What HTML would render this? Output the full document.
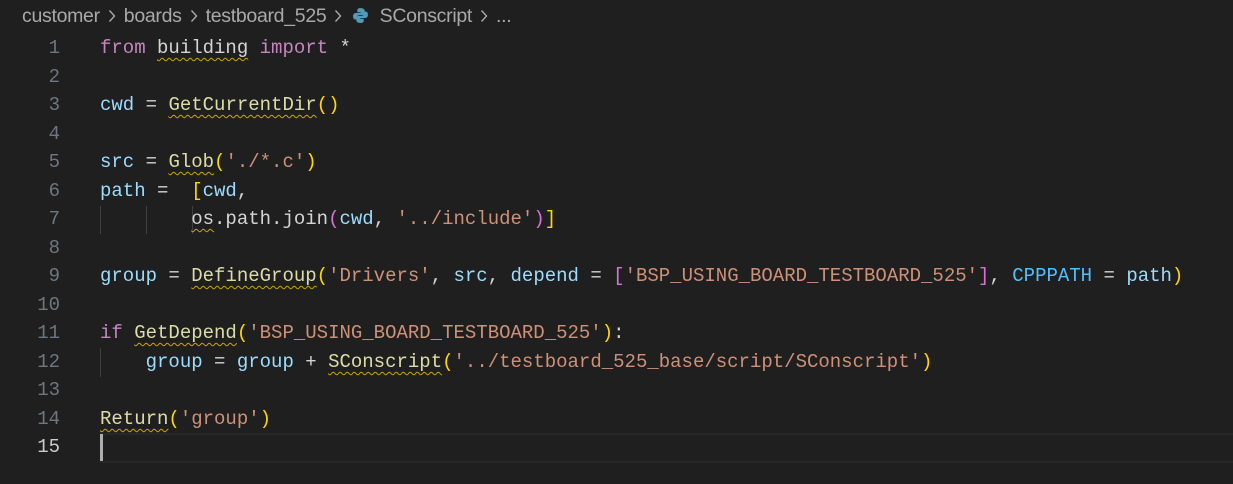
<!DOCTYPE html>
<html><head><meta charset="utf-8"><style>
html,body{margin:0;padding:0;background:#1f1f1f;width:1233px;height:484px;overflow:hidden}
.bc{position:absolute;left:22px;top:5px;font-family:"Liberation Sans",sans-serif;font-size:19.5px;color:#a9a9a9;white-space:pre;letter-spacing:-0.3px}
.bc .s{display:inline-block;width:24px;text-align:center}
.bc .s svg{vertical-align:-1px}
.ln{position:absolute;left:0;width:60px;text-align:right;font-family:"Liberation Mono",monospace;font-size:19px;color:#6e7681}
.ln.a{color:#cccccc}
.code{position:absolute;left:100px;font-family:"Liberation Mono",monospace;font-size:19px;color:#d4d4d4;white-space:pre}
.k{color:#c586c0}.v{color:#9cdcfe}.f{color:#dcdcaa}.s1{color:#ce9178}.c{color:#4fc1ff}
.y{color:#ffd700}.p{color:#da70d6}.b{color:#179fff}
.w{text-decoration:underline wavy #cca700;text-decoration-thickness:1px;text-underline-offset:4px}
.cur{position:absolute;left:100px;top:433px;width:1133px;height:26px;border-top:2px solid #282828;border-bottom:2px solid #282828}
.caret{position:absolute;left:100px;top:434px;width:3px;height:27px;background:#aeafad}
.g{position:absolute;width:1px;background:#404040}
</style></head><body>
<div class="bc">customer<span class="s"><svg width="8" height="14" viewBox="0 0 8 14"><path d="M1.5 1.5 6.5 7 1.5 12.5" stroke="#a9a9a9" stroke-width="1.4" fill="none"/></svg></span>boards<span class="s"><svg width="8" height="14" viewBox="0 0 8 14"><path d="M1.5 1.5 6.5 7 1.5 12.5" stroke="#a9a9a9" stroke-width="1.4" fill="none"/></svg></span>testboard_525<span class="s"><svg width="8" height="14" viewBox="0 0 8 14"><path d="M1.5 1.5 6.5 7 1.5 12.5" stroke="#a9a9a9" stroke-width="1.4" fill="none"/></svg></span><svg width="17" height="17" viewBox="0 0 16 16" style="vertical-align:-2px;margin-left:2px"><path d="M8 1c-3 0-3 1.3-3 2.3V5h3.2v.6H3.5C2 5.6 1 6.8 1 8.8s1 3 2.3 3H4.5v-1.7c0-1.3 1-2.4 2.4-2.4h3c1.1 0 2-.9 2-2V3.3C11.9 2 10.8 1 8 1z" fill="#519aba"/><path d="M8 15c3 0 3-1.3 3-2.3V11H7.8v-.6h4.7c1.5 0 2.5-1.2 2.5-3.2s-1-3-2.3-3h-1.2v1.7c0 1.3-1 2.4-2.4 2.4h-3c-1.1 0-2 .9-2 2v1.9C4.1 14 5.2 15 8 15z" fill="#519aba"/></svg>  SConscript<span class="s"><svg width="8" height="14" viewBox="0 0 8 14"><path d="M1.5 1.5 6.5 7 1.5 12.5" stroke="#a9a9a9" stroke-width="1.4" fill="none"/></svg></span>...</div>

<div class="cur"></div>
<div class="g" style="left:100px;top:206px;height:28px"></div>
<div class="g" style="left:146px;top:206px;height:28px"></div>
<div class="g" style="left:192px;top:206px;height:28px"></div>
<div class="g" style="left:100px;top:348px;height:29px"></div>

<div class="ln" style="top:37px">1</div><div class="code" style="top:37px"><span class="k">from</span> <span class="w">building</span> <span class="k">import</span> *</div>
<div class="ln" style="top:66px">2</div>
<div class="ln" style="top:94px">3</div><div class="code" style="top:94px"><span class="v">cwd</span> = <span class="f w">GetCurrentDir</span><span class="y">()</span></div>
<div class="ln" style="top:123px">4</div>
<div class="ln" style="top:151px">5</div><div class="code" style="top:151px"><span class="v">src</span> = <span class="f w">Glob</span><span class="y">(</span><span class="s1">'./*.c'</span><span class="y">)</span></div>
<div class="ln" style="top:180px">6</div><div class="code" style="top:180px"><span class="v">path</span> =  <span class="y">[</span><span class="v">cwd</span>,</div>
<div class="ln" style="top:208px">7</div><div class="code" style="top:208px">        <span class="w">os</span>.path.join<span class="p">(</span><span class="v">cwd</span>, <span class="s1">'../include'</span><span class="p">)</span><span class="y">]</span></div>
<div class="ln" style="top:237px">8</div>
<div class="ln" style="top:265px">9</div><div class="code" style="top:265px"><span class="v">group</span> = <span class="f w">DefineGroup</span><span class="y">(</span><span class="s1">'Drivers'</span>, <span class="v">src</span>, <span class="v">depend</span> = <span class="p">[</span><span class="s1">'BSP_USING_BOARD_TESTBOARD_525'</span><span class="p">]</span>, <span class="c">CPPPATH</span> = <span class="v">path</span><span class="y">)</span></div>
<div class="ln" style="top:294px">10</div>
<div class="ln" style="top:322px">11</div><div class="code" style="top:322px"><span class="k">if</span> <span class="f w">GetDepend</span><span class="y">(</span><span class="s1">'BSP_USING_BOARD_TESTBOARD_525'</span><span class="y">)</span>:</div>
<div class="ln" style="top:351px">12</div><div class="code" style="top:351px">    <span class="v">group</span> = <span class="v">group</span> + <span class="f w">SConscript</span><span class="y">(</span><span class="s1">'../testboard_525_base/script/SConscript'</span><span class="y">)</span></div>
<div class="ln" style="top:379px">13</div>
<div class="ln" style="top:408px">14</div><div class="code" style="top:408px"><span class="f w">Return</span><span class="y">(</span><span class="s1">'group'</span><span class="y">)</span></div>
<div class="ln a" style="top:436px">15</div>
<div class="caret"></div>
</body></html>
